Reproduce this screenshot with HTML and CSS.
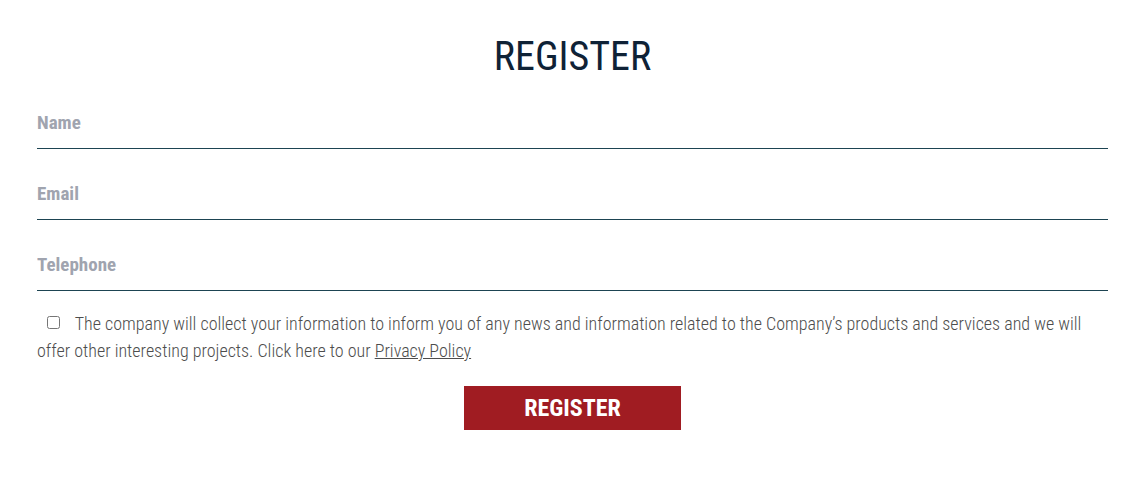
FILE: index.html
```html
<!DOCTYPE html>
<html lang="en">
<head>
    <meta charset="UTF-8">
    <meta name="viewport" content="width=device-width, initial-scale=1.0">
    <title>Register</title>
    <link rel="stylesheet" href="styles.css">
</head>
<body>
    <div class="container">
        <h1 class="title">REGISTER</h1>
        <form class="reg_form">
            <div class="field">
                <input type="text" placeholder="Name">
            </div>
            <div class="field">
                <input type="email" placeholder="Email">
            </div>
            <div class="field">
                <input type="tel" placeholder="Telephone">
            </div>
            <div class="agree">
                <label>
                    <input type="checkbox" class="agree_box">
                    The company will collect your information to inform you of any news and information related to the Company’s products and services and we will offer other interesting projects. Click here to our <a href="#">Privacy Policy</a>
                </label>
            </div>
            <div class="btn_row">
                <button type="button" class="reg_btn">REGISTER</button>
            </div>
        </form>
    </div>
</body>
</html>
```

FILE: styles.css
```css
*{
    margin: 0;
    padding: 0;
    box-sizing: border-box;
}
body{
    background: #fff;
    font-family: Roboto, "Liberation Sans", sans-serif;
    font-stretch: 75%;
}
.container{
    padding: 33px 39px 0 37px;
}
.title{
    text-align: center;
    font-weight: 400;
    font-size: 40px;
    line-height: 47px;
    color: #0f2236;
}
.reg_form{
    margin-top: -2px;
}
.field{
    margin-top: 34px;
}
.field input{
    display: block;
    width: 100%;
    height: 37px;
    border: none;
    border-bottom: 1px solid #1d4452;
    outline: none;
    font-family: inherit;
    font-stretch: 75%;
    font-size: 19px;
    line-height: 22px;
    font-weight: 700;
    color: #333;
    padding: 0 0 15px 0;
    background: transparent;
}
.field input::placeholder{
    color: #a0a4af;
}
.agree{
    margin-top: 19px;
    font-size: 18px;
    font-weight: 300;
    line-height: 27px;
    color: #4d4d4d;
}
.agree_box{
    width: 13px;
    height: 13px;
    margin: 0 11px 0 10px;
    vertical-align: 1px;
}
.agree a{
    color: #4d4d4d;
}
.btn_row{
    display: flex;
    justify-content: center;
    margin-top: 22px;
}
.reg_btn{
    width: 217px;
    height: 44px;
    border: none;
    background: #a01c22;
    color: #fff;
    font-family: inherit;
    font-stretch: 75%;
    font-size: 24px;
    font-weight: 700;
    cursor: pointer;
}
```
